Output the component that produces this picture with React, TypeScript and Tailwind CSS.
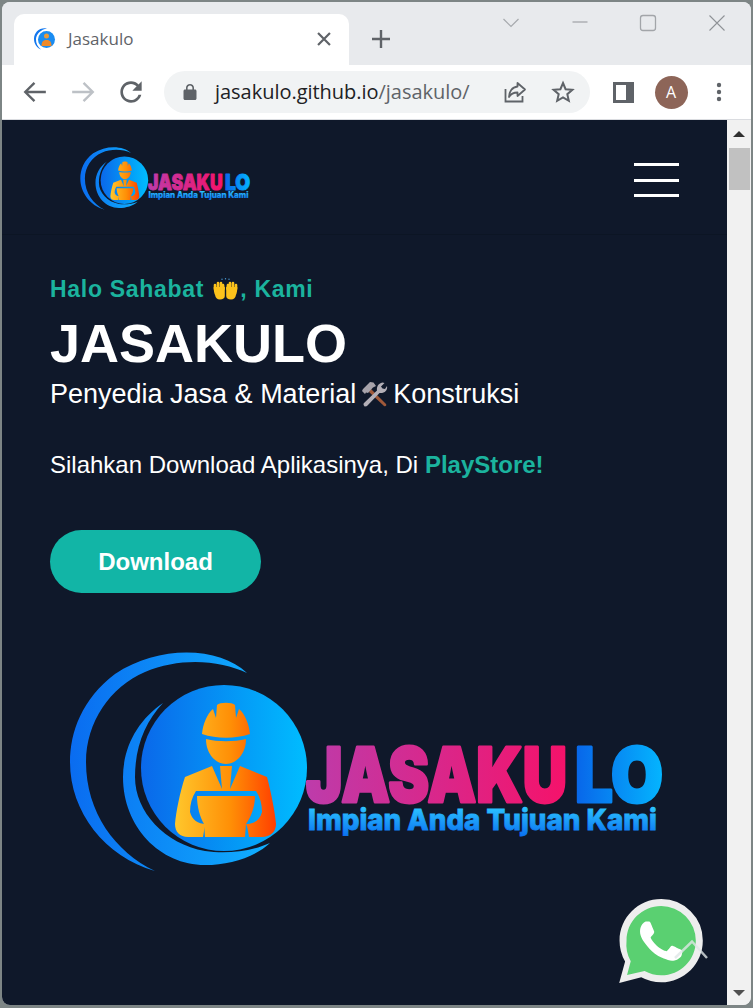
import { useId } from "react";

function Logo({ className }: { className: string }) {
  const id = useId().replace(/[^a-zA-Z0-9]/g, "");
  return (
    <svg viewBox="0 0 595 220" className={className} style={{ overflow: "visible" }}>
      <defs>
        <linearGradient id={id + "b"} gradientUnits="userSpaceOnUse" x1="71" y1="0" x2="237" y2="0">
          <stop offset="0" stopColor="#0a68ea" />
          <stop offset="1" stopColor="#00bdff" />
        </linearGradient>
        <linearGradient id={id + "a"} gradientUnits="userSpaceOnUse" x1="0" y1="0" x2="200" y2="0">
          <stop offset="0" stopColor="#0a6cf0" />
          <stop offset="1" stopColor="#10b0ff" />
        </linearGradient>
        <linearGradient id={id + "o"} gradientUnits="userSpaceOnUse" x1="105" y1="0" x2="206" y2="0">
          <stop offset="0" stopColor="#ffc72c" />
          <stop offset="0.55" stopColor="#ff8f06" />
          <stop offset="1" stopColor="#ff3f00" />
        </linearGradient>
        <linearGradient id={id + "p"} gradientUnits="userSpaceOnUse" x1="235" y1="0" x2="498" y2="0">
          <stop offset="0" stopColor="#bd3cab" />
          <stop offset="1" stopColor="#f5126a" />
        </linearGradient>
        <linearGradient id={id + "l"} gradientUnits="userSpaceOnUse" x1="508" y1="0" x2="594" y2="0">
          <stop offset="0" stopColor="#0868ea" />
          <stop offset="1" stopColor="#04b6ff" />
        </linearGradient>
        <linearGradient id={id + "t"} gradientUnits="userSpaceOnUse" x1="0" y1="155" x2="0" y2="186">
          <stop offset="0" stopColor="#2cc4ff" />
          <stop offset="1" stopColor="#086cf0" />
        </linearGradient>
      </defs>
      <path
        d="M177 21C150 -5 90 -8 45 22C12 47 0 80 0 110C0 160 35 205 85 219C45 200 16 160 16 110C16 70 40 35 75 20C110 5 150 8 177 21Z"
        fill={`url(#${id}a)`}
      />
      <path
        d="M93 51C68 68 53 95 53 125C53 175 90 213 135 213C160 213 185 205 200 191C180 200 155 202 135 199C95 192 65 160 65 125C65 95 75 70 93 51Z"
        fill={`url(#${id}a)`}
      />
      <circle cx="154" cy="116" r="83" fill={`url(#${id}b)`} />
      <g fill={`url(#${id}o)`}>
        <path d="M132 82C133 72 137 62 143 57L146 66L147 53C150 50 162 50 165 53L166 66L169 57C175 62 179 72 180 82C165 87 147 87 132 82Z" />
        <path d="M136 87C148 90 164 90 176 87C176 102 166 112 156 112C146 112 136 102 136 87Z" />
        <path d="M115 125L142 114L152 137L150 114H162L160 137L170 114L197 125C201 140 205 160 206 172C206 180 200 185 192 185H179C178 180 178 176 176 172C184 172 190 168 192 160C192 152 190 145 186 139H126C122 145 120 152 120 160C122 168 128 172 136 172C134 176 134 180 133 185H118C110 185 105 180 105 172C106 160 110 140 115 125Z" />
        <path d="M127 144H185C185 155 181 165 176 172L175 185H135L134 172C130 165 127 155 127 144Z" />
      </g>
      <text
        x="236"
        y="149.500"
        textLength="261"
        lengthAdjust="spacingAndGlyphs"
        fontFamily="Inter, sans-serif"
        fontWeight="900"
        fontSize="76"
        fill={`url(#${id}p)`}
        stroke={`url(#${id}p)`}
        strokeWidth="3"
        strokeLinejoin="round"
      >
        JASAKU
      </text>
      <text
        x="505"
        y="149.500"
        textLength="88"
        lengthAdjust="spacingAndGlyphs"
        fontFamily="Inter, sans-serif"
        fontWeight="900"
        fontSize="76"
        fill={`url(#${id}l)`}
        stroke={`url(#${id}l)`}
        strokeWidth="3"
        strokeLinejoin="round"
      >
        LO
      </text>
      <text
        x="238"
        y="178"
        textLength="349"
        lengthAdjust="spacingAndGlyphs"
        fontFamily="Inter, sans-serif"
        fontWeight="800"
        fontSize="29"
        fill={`url(#${id}t)`}
        stroke={`url(#${id}t)`}
        strokeWidth="0.8"
      >
        Impian Anda Tujuan Kami
      </text>
    </svg>
  );
}

function Favicon() {
  return (
    <svg viewBox="0 0 24 24" className="w-[24px] h-[24px]">
      <path d="M14 1.500C7 0 1 5 1 12C1 17 4 21 8 22.500C4.500 20 2.800 16 3 12C3.200 7 8 2.500 14 1.500Z" fill="#1478ee" />
      <circle cx="13.500" cy="12.500" r="8.500" fill="#1a8cf2" />
      <circle cx="13.500" cy="9" r="2.500" fill="#e99a3c" />
      <path d="M8.500 19C8.500 14.500 10.500 13 13.500 13C16.500 13 18.500 14.500 18.500 19Z" fill="#ee8a2a" />
    </svg>
  );
}

function Stroke({ d, color = "#5f6368", w = 2, size = 24 }: { d: string; color?: string; w?: number; size?: number }) {
  return (
    <svg viewBox="0 0 24 24" width={size} height={size} fill="none" stroke={color} strokeWidth={w}>
      <path d={d} />
    </svg>
  );
}

function NavBtn({ children }: { children: React.ReactNode }) {
  return <div className="w-[48px] h-[48px] shrink-0 flex items-center justify-center">{children}</div>;
}

function HandsEmoji() {
  return (
    <svg viewBox="0 0 27 22" className="w-[27px] h-[22px] inline-block align-[-3px] mx-[1px]">
      <g fill="#4a9bd4">
        <circle cx="10" cy="1.200" r="0.700" />
        <circle cx="13.500" cy="0.700" r="0.700" />
        <circle cx="17" cy="1.200" r="0.700" />
      </g>
      <g stroke="#fcc21b" strokeWidth="2.600" strokeLinecap="round" fill="none">
        <path d="M3 11L3 7M6 10L6 5M9 10L9 5M11.500 11L11 7" />
        <path d="M24 11L24 7M21 10L21 5M18 10L18 5M15.500 11L16 7" />
      </g>
      <path d="M1.700 9H12.800V18C12.800 20 11 21.500 8 21.500C5 21.500 3.500 19.500 3.200 17.500C2 15 1.700 12 1.700 9Z" fill="#fcc21b" />
      <path d="M25.300 9H14.200V18C14.200 20 16 21.500 19 21.500C22 21.500 23.500 19.500 23.800 17.500C25 15 25.300 12 25.300 9Z" fill="#fcc21b" />
    </svg>
  );
}

function ToolsEmoji() {
  return (
    <svg viewBox="0 0 27 27" className="w-[27px] h-[27px] mx-[5px] shrink-0">
      <path d="M10 8L25 23C26 24.500 24.500 26 23 25L8 11Z" fill="#a0593a" />
      <path d="M2 8L9 1L12.500 1.500L15 5L12 6.500L7 12L5 11.500L4 13L1 10Z" fill="#a7a3ab" />
      <path d="M3 22L16 9.500C15.500 6 17 2.500 21.500 1.500L23.500 2L20 5.500L21.500 7.500L24 8L26 5C27 9.500 23.500 12.500 18.500 12L6 25C4 26.500 1.500 24 3 22Z" fill="#b3afb7" />
    </svg>
  );
}

function WhatsApp() {
  return (
    <div className="absolute left-[615px] top-[779px] w-[92px] h-[90px]">
      <svg viewBox="0 0 24 24" className="absolute left-[2px] top-0 w-[84px] h-[84px]">
        <path
          d="M.057 24l1.687-6.163A11.867 11.867 0 01.157 11.892C.16 5.335 5.495 0 12.05 0a11.82 11.82 0 018.413 3.488 11.824 11.824 0 013.48 8.414c-.003 6.557-5.338 11.892-11.893 11.892a11.9 11.9 0 01-5.688-1.448L.057 24z"
          fill="#eeeeee"
        />
        <path
          d="M2.300 21.700L3.350 17.800A9.900 9.900 0 0 1 2.150 11.900C2.150 6.400 6.600 2 12.050 2a9.900 9.900 0 0 1 9.900 9.900c0 5.500-4.450 9.900-9.900 9.900a9.900 9.900 0 0 1-4.750-1.200z"
          fill="#5ad071"
        />
        <path
          d="M17.472 14.382c-.297-.149-1.758-.867-2.03-.967-.273-.099-.471-.148-.67.15-.197.297-.767.966-.94 1.164-.173.199-.347.223-.644.075-.297-.15-1.255-.463-2.39-1.475-.883-.788-1.48-1.761-1.653-2.059-.173-.297-.018-.458.13-.606.134-.133.298-.347.446-.52.149-.174.198-.298.298-.497.099-.198.05-.371-.025-.52-.075-.149-.669-1.612-.916-2.207-.242-.579-.487-.5-.669-.51-.173-.008-.371-.01-.57-.01-.198 0-.52.074-.792.372-.272.297-1.04 1.016-1.04 2.479 0 1.462 1.065 2.875 1.213 3.074.149.198 2.096 3.2 5.077 4.487.709.306 1.262.489 1.694.625.712.227 1.36.195 1.871.118.571-.085 1.758-.719 2.006-1.413.248-.694.248-1.289.173-1.413-.074-.124-.272-.198-.57-.347z"
          fill="#ffffff"
        />
      </svg>
      <svg viewBox="0 0 92 90" className="absolute inset-0 w-[92px] h-[90px]" fill="none">
        <path d="M58 59L75 42.500L90 59" stroke="#dfe6e6" strokeOpacity="0.8" strokeWidth="2.500" />
      </svg>
    </div>
  );
}

export default function App() {
  return (
    <div className="w-[753px] h-[1008px] flex flex-col overflow-hidden bg-[#7d8585] pt-[2px] pl-[2px] pr-[2px] pb-[3px] font-['Liberation_Sans',sans-serif]">
      <div className="flex-1 flex flex-col min-h-0 rounded-t-[8px] rounded-b-[8px] overflow-hidden bg-[#e8eaed]">
        {/* Tab strip */}
        <div className="h-[63px] shrink-0 flex items-end pl-[12px] bg-[#e8eaed]">
          <div className="w-[335px] h-[51px] bg-white rounded-t-[10px] flex items-center pl-[19px] pr-[14px] pb-[2px]">
            <Favicon />
            <span className="ml-[11px] text-[17px] text-[#5f6368] font-['Open_Sans',sans-serif]">Jasakulo</span>
            <span className="ml-auto">
              <Stroke d="M5.500 5.500L18.500 18.500M18.500 5.500L5.500 18.500" w={2.400} size={22} />
            </span>
          </div>
          <div className="ml-[20px] mb-[14px]">
            <Stroke d="M12 3V21M3 12H21" w={2.400} size={24} />
          </div>
          <div className="ml-[106px] self-start mt-[9px] flex items-center gap-[44.500px]">
            <Stroke d="M4.500 8L12 15.500L19.500 8" color="#a6a9ad" w={1.200} size={24} />
            <Stroke d="M4.500 11H19.500" color="#8f9297" w={1.100} size={24} />
            <svg width="24" height="24" viewBox="0 0 24 24" fill="none" stroke="#a2a5a9" strokeWidth="1.300">
              <rect x="4.500" y="4.500" width="15" height="15" rx="2.500" />
            </svg>
            <Stroke d="M4.500 4.500L19.500 19.500M19.500 4.500L4.500 19.500" color="#8f9297" w={1.100} size={24} />
          </div>
        </div>

        {/* Toolbar */}
        <div className="h-[55px] shrink-0 bg-white border-b border-[#dadce0] flex items-center pl-[9px]">
          <NavBtn>
            <Stroke d="M22 12H3.500M11.500 3.500L3 12L11.500 20.500" w={2.200} size={26} />
          </NavBtn>
          <NavBtn>
            <Stroke d="M2 12H20.500M12.500 3.500L21 12L12.500 20.500" color="#bdc1c6" w={2.200} size={26} />
          </NavBtn>
          <NavBtn>
            <svg viewBox="0 0 24 24" width="32" height="32" fill="#5f6368">
              <path d="M17.650 6.350C16.200 4.900 14.210 4 12 4c-4.420 0-7.990 3.580-7.990 8s3.570 8 7.990 8c3.730 0 6.840-2.550 7.730-6h-2.080c-.820 2.330-3.040 4-5.650 4-3.310 0-6-2.690-6-6s2.690-6 6-6c1.660 0 3.140.690 4.220 1.780L13 11h7V4l-2.350 2.350z" />
            </svg>
          </NavBtn>
          <div className="ml-[9px] w-[426px] h-[42px] rounded-full bg-[#f1f3f4] flex items-center pl-[19px] shrink-0">
            <svg viewBox="0 0 14 18" width="14" height="18" fill="#5f6368">
              <path d="M12 6.500H11V4.800C11 2.600 9.200 1 7 1S3 2.600 3 4.800V6.500H2C1.200 6.500 .500 7.200 .500 8V15.500C.500 16.300 1.200 17 2 17H12C12.800 17 13.500 16.300 13.500 15.500V8C13.500 7.200 12.800 6.500 12 6.500ZM4.600 6.500V4.800C4.600 3.500 5.700 2.500 7 2.500S9.400 3.500 9.400 4.800V6.500Z" />
            </svg>
            <span className="ml-[18px] text-[20px] leading-none font-['Open_Sans',sans-serif] text-[#202124] tracking-[-0.03px]">
              jasakulo.github.io<span className="text-[#5f6368]">/jasakulo/</span>
            </span>
            <span className="ml-auto mr-[15px] flex items-center gap-[24px]">
              <svg viewBox="0 0 24 24" width="24" height="24" fill="none" stroke="#5f6368" strokeWidth="1.800">
                <path d="M2.500 9V21.500H19.500V16" />
                <path d="M14.500 3L22 9.500L14.500 16V12.500C11 12.500 8 13.500 6 17C6 12 9 7 14.500 6.500Z" strokeLinejoin="round" />
              </svg>
              <Stroke d="M12 3L14.600 9.200L21.400 9.800L16.300 14.200L17.800 20.800L12 17.300L6.200 20.800L7.700 14.200L2.600 9.800L9.400 9.200Z" w={2} size={24} />
            </span>
          </div>
          <div className="ml-[9px] flex items-center">
            <NavBtn>
              <svg viewBox="0 0 21 21" width="21" height="21">
                <rect width="21" height="21" fill="#5f6368" />
                <rect x="3" y="3" width="10" height="15" fill="#ffffff" />
              </svg>
            </NavBtn>
            <NavBtn>
              <div className="w-[33px] h-[33px] rounded-full bg-[#8d6558] text-white flex items-center justify-center text-[16px] font-['Open_Sans',sans-serif]">
                A
              </div>
            </NavBtn>
            <NavBtn>
              <svg viewBox="0 0 6 20" width="6" height="20" fill="#5f6368">
                <circle cx="3" cy="3" r="2.200" />
                <circle cx="3" cy="10" r="2.200" />
                <circle cx="3" cy="17" r="2.200" />
              </svg>
            </NavBtn>
          </div>
        </div>

        {/* Page + scrollbar */}
        <div className="flex-1 min-h-0 flex">
          <div className="relative flex-1 min-w-0 bg-[#0f182a] overflow-hidden">
            <header className="h-[115px] flex items-start justify-between pl-[78px] pr-[48px] border-b border-[#0c1524]">
              <Logo className="w-[171px] h-[63px] mt-[27px]" />
              <div className="mt-[43px] w-[45px] flex flex-col gap-[12.500px]">
                <span className="h-[3px] bg-white" />
                <span className="h-[3px] bg-white" />
                <span className="h-[3px] bg-white" />
              </div>
            </header>
            <div className="pl-[48px]">
              <p className="mt-[39px] h-[30px] leading-[30px] text-[23px] font-bold text-[#1bb39e] tracking-[0.7px] whitespace-nowrap">
                Halo Sahabat <HandsEmoji />, Kami
              </p>
              <h1 className="mt-[9px] h-[60px] leading-[60px] text-[54px] font-bold text-white">JASAKULO</h1>
              <div className="mt-[5px] h-[32px] flex items-center text-[27px] text-white whitespace-nowrap">
                <span>Penyedia Jasa &amp; Material</span>
                <ToolsEmoji />
                <span>Konstruksi</span>
              </div>
              <p className="mt-[39px] h-[32px] leading-[32px] text-[24px] text-white whitespace-nowrap">
                Silahkan Download Aplikasinya, Di <span className="font-bold text-[#1bb39e]">PlayStore!</span>
              </p>
              <button className="mt-[49px] w-[211px] h-[63px] rounded-full bg-[#12b5a6] text-white font-bold text-[24px] flex items-center justify-center">
                Download
              </button>
              <Logo className="ml-[20px] mt-[59px] w-[595px] h-[220px]" />
            </div>
            <WhatsApp />
          </div>
          <div className="w-[24px] shrink-0 bg-[#f1f1f1] flex flex-col items-center">
            <div className="h-[28px] flex items-center justify-center">
              <div className="w-0 h-0 border-l-[6px] border-r-[6px] border-b-[6px] border-l-transparent border-r-transparent border-b-[#303030]" />
            </div>
            <div className="w-[21px] h-[42px] bg-[#c1c1c1]" />
            <div className="mt-auto h-[24px] flex items-center justify-center">
              <div className="w-0 h-0 border-l-[6px] border-r-[6px] border-t-[6px] border-l-transparent border-r-transparent border-t-[#505050]" />
            </div>
          </div>
        </div>
      </div>
    </div>
  );
}
